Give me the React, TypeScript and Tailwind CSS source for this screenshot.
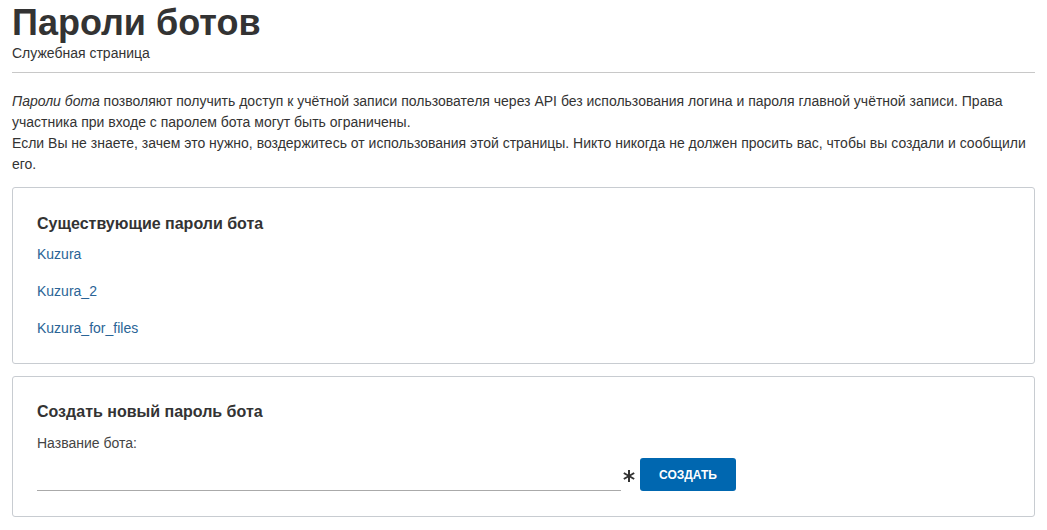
import { useState } from 'react';

const bots = ['Kuzura', 'Kuzura_2', 'Kuzura_for_files'];

export default function App() {
  const [name, setName] = useState('');

  return (
    <div className="min-h-screen bg-white px-3 text-[#333] font-['Liberation_Sans',Arial,sans-serif]">
      {/* Заголовок */}
      <h1 className="pt-[1px] text-[36px] font-bold leading-[44px] text-[#333]">Пароли ботов</h1>
      <div className="text-[14px] leading-[16px] text-[#333]">Служебная страница</div>
      <hr className="mt-[11px] border-t border-[#c8c8c8]" />

      {/* Описание */}
      <p className="mt-[18px] text-[14px] leading-[21px]">
        <i>Пароли бота</i>{' '}позволяют получить доступ к учётной записи пользователя через API без
        использования логина и пароля главной учётной записи. Права участника при входе с паролем
        бота могут быть ограничены.
        <br />
        Если Вы не знаете, зачем это нужно, воздержитесь от использования этой страницы. Никто
        никогда не должен просить вас, чтобы вы создали и сообщили его.
      </p>

      {/* Существующие пароли */}
      <section className="mt-[12px] rounded-[3px] border border-[#c8ccd1] px-6 pt-[24px] pb-[24px]">
        <h2 className="text-[16px] font-bold leading-[24px] text-[#333]">Существующие пароли бота</h2>
        <ul className="mt-[8px] flex flex-col gap-[16px]">
          {bots.map((b) => (
            <li key={b} className="text-[14px] leading-[21px]">
              <a href="#" className="text-[#2a6496] hover:underline">
                {b}
              </a>
            </li>
          ))}
        </ul>
      </section>

      {/* Создать новый */}
      <section className="mt-[12px] rounded-[3px] border border-[#c8ccd1] px-6 pt-[23px] pb-[25px]">
        <h2 className="text-[16px] font-bold leading-[24px] text-[#333]">Создать новый пароль бота</h2>
        <label className="mt-[9px] block text-[14px] leading-[20px] text-[#444]">Название бота:</label>
        <div className="mt-[5px] flex items-center">
          <input
            value={name}
            onChange={(e) => setName(e.target.value)}
            className="h-[33px] w-[584px] border-b border-[#aaa] bg-transparent text-[14px] outline-none"
          />
          <svg width="12" height="12" viewBox="0 0 12 12" className="ml-[2px] mr-[5px] mt-[2px]">
            <g stroke="#333" strokeWidth="2" strokeLinecap="butt">
              <line x1="6" y1="0" x2="6" y2="12" />
              <line x1="0.8" y1="3" x2="11.2" y2="9" />
              <line x1="0.8" y1="9" x2="11.2" y2="3" />
            </g>
          </svg>
          <button className="h-[33px] w-[96px] rounded-[3px] bg-[#0067b0] text-[12px] font-bold text-white">
            СОЗДАТЬ
          </button>
        </div>
      </section>
    </div>
  );
}
